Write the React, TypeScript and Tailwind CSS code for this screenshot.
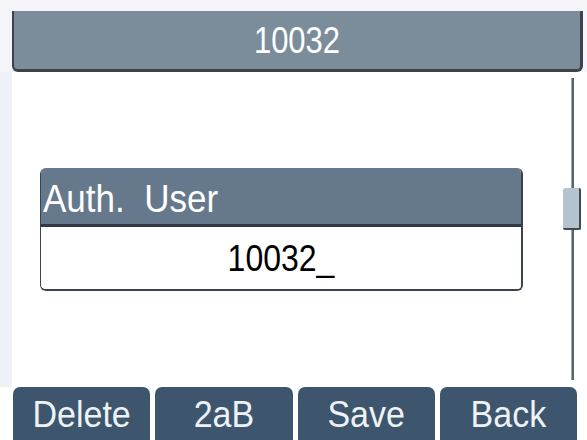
const softKeys = ['Delete', '2aB', 'Save', 'Back']

function ScrollBar() {
  return (
    <div className="relative w-[18px] h-full flex justify-center">
      <div className="w-[3px] h-full bg-[#56636e] border-l border-[#9aa8b4]" />
      <div className="absolute left-0 top-[110px] w-[18px] h-[42px] bg-[#b5c3d1] border-r-2 border-b-2 border-[#3f4a55] rounded-[2px]" />
    </div>
  )
}

export default function App() {
  return (
    <div className="w-[587px] h-[440px] bg-[#eef2f7] overflow-hidden flex flex-col font-['Liberation_Sans',Arial,sans-serif]">
      <div className="pt-[11px] pl-[12px] pr-[4px] bg-[#f5f5f9]">
        <div className="h-[61px] bg-[#7b8d9a] rounded-b-[6px] border-l-2 border-r-[3px] border-b-[3px] border-[#3b444d] flex items-center justify-center">
          <span className="inline-block text-white text-[31px] leading-none scale-y-[1.18]">10032</span>
        </div>
      </div>

      <div className="flex-1 flex pl-[12px]">
        <div className="flex-1 bg-white flex pt-[96px] pl-[28px]">
          <div className="w-[483px] h-[123px] self-start flex flex-col rounded-[6px] border-2 border-[#3b444d] border-t-0 border-l overflow-hidden">
            <div className="h-[59px] bg-[#66788c] flex items-center pl-[2px] pt-[4px] border-b-[3px] border-[#2f3a46]">
              <span className="inline-block text-white text-[35px] leading-none scale-y-[1.1]">Auth.&nbsp; User</span>
            </div>
            <div className="flex-1 bg-white flex items-center justify-center">
              <span className="inline-block text-black text-[32px] leading-none scale-y-[1.15]">10032_</span>
            </div>
          </div>
        </div>
        <div className="bg-white pt-[6px] pb-[7px] pl-[2px] pr-[6px]">
          <ScrollBar />
        </div>
      </div>

      <div className="h-[53px] flex gap-[5px] pl-[13px] pr-[10px] bg-white">
        {softKeys.map((k) => (
          <div
            key={k}
            className="flex-1 bg-[#3d566e] rounded-t-[7px] flex items-center justify-center text-[#eef2f5] text-[34px] leading-none"
          >
            <span className="inline-block scale-y-[1.08]">{k}</span>
          </div>
        ))}
      </div>
    </div>
  )
}
